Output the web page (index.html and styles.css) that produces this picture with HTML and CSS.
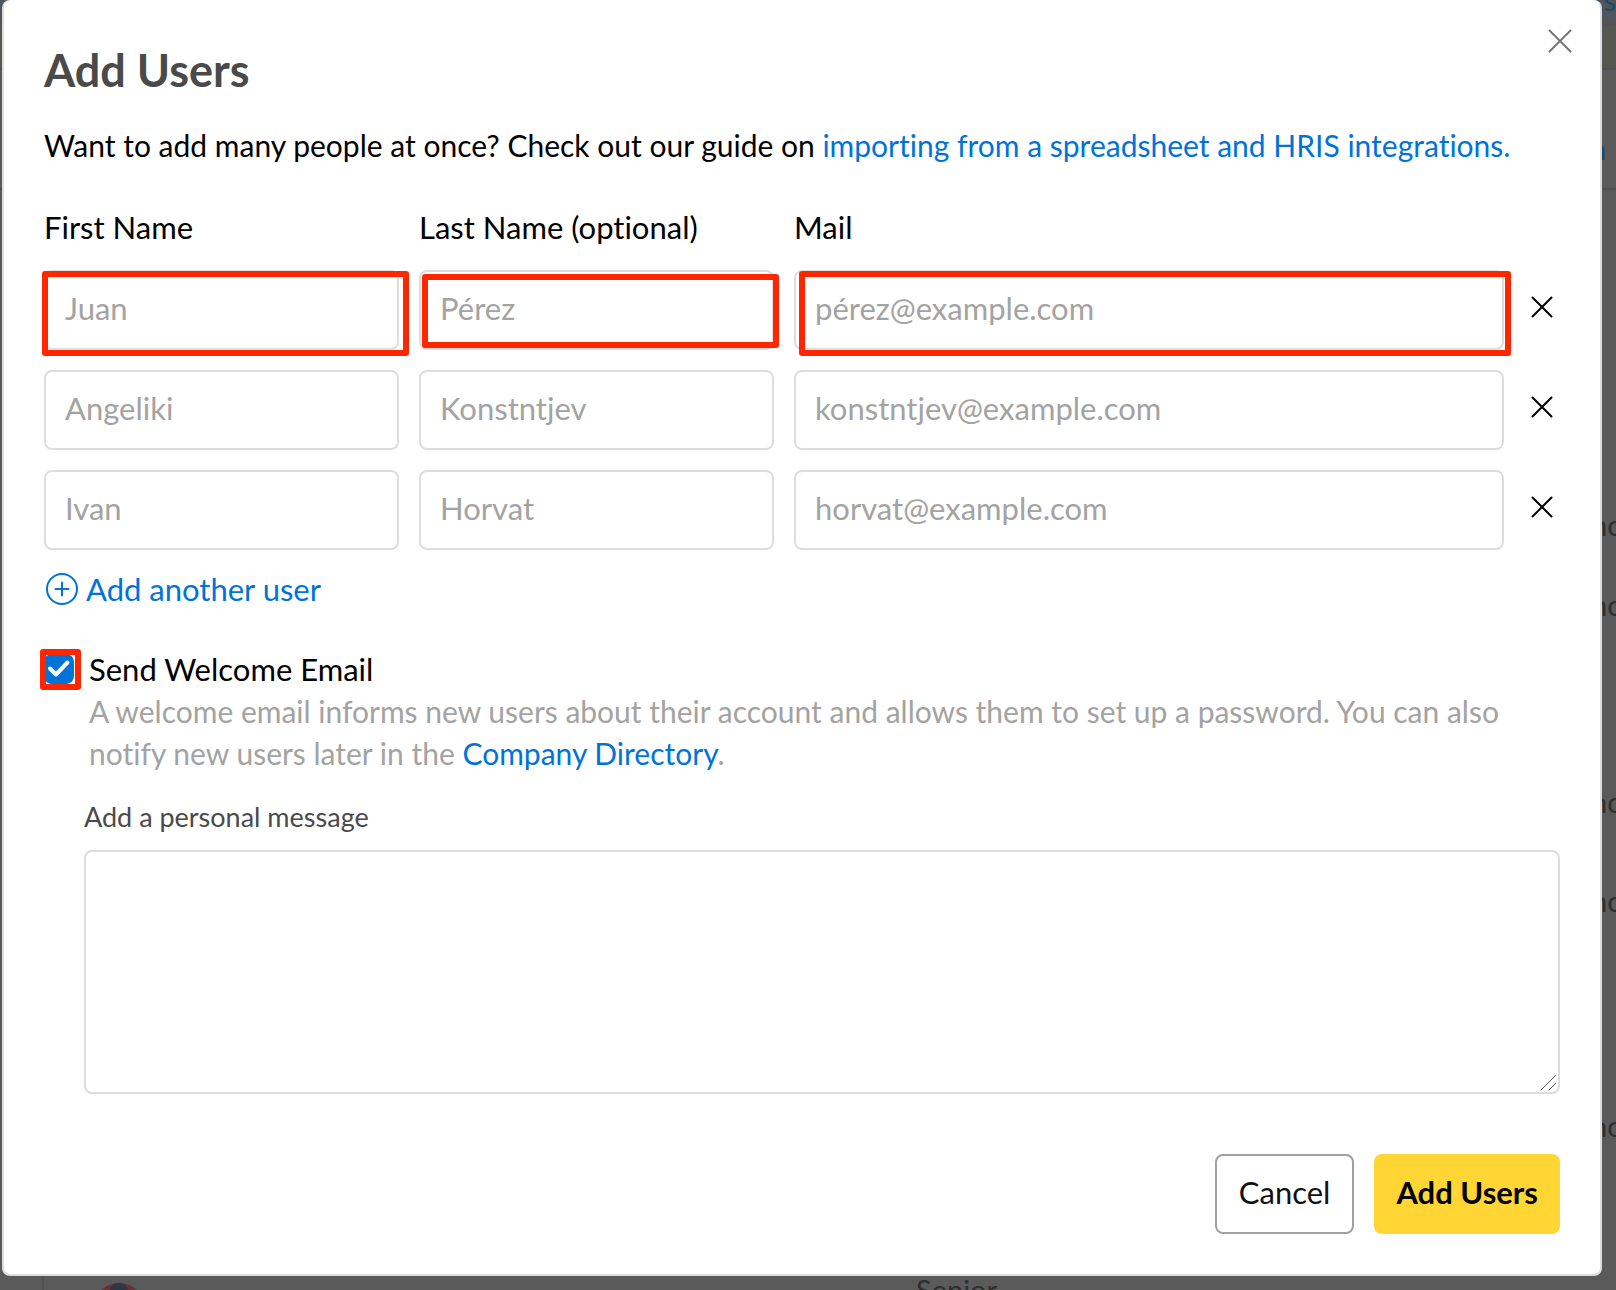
FILE: index.html
```html
<!DOCTYPE html>
<html lang="en">
<head>
<meta charset="utf-8">
<title>Add Users</title>
<link rel="stylesheet" href="styles.css">
</head>
<body>
<div class="page" aria-hidden="true">
  <div class="page-tabs"><span>Requests</span></div>
  <div class="page-bar"></div>
  <div class="page-head"><span>Open</span></div>
  <div class="page-list">
    <span class="cell cell-a">no</span>
    <span class="cell cell-b">no</span>
    <span class="cell cell-c">no</span>
    <span class="cell cell-d">no</span>
    <span class="cell cell-e">no</span>
  </div>
  <div class="page-row">
    <svg class="avatar" viewBox="0 0 52 52"><circle cx="26" cy="26" r="26" fill="#6b3036"/><ellipse cx="26" cy="7" rx="9" ry="7" fill="#2e3642"/></svg>
    <span class="role">Senior</span>
  </div>
</div>
<div class="overlay">
  <form class="modal" role="dialog" aria-labelledby="title">
    <button class="close" type="button" aria-label="Close"><svg width="24" height="24" viewBox="0 0 24 24"><path d="M1.5 1.5l21 21M22.5 1.5l-21 21"/></svg></button>
    <h1 id="title">Add Users</h1>
    <p class="intro">Want to add many people at once? Check out our guide on <a href="#">importing from a spreadsheet and HRIS integrations.</a></p>
    <div class="users">
      <label for="first1">First Name</label>
      <label for="last1">Last Name (optional)</label>
      <label class="wide" for="mail1">Mail</label>

      <div class="field mark mark-first"><input id="first1" type="text" placeholder="Juan"></div>
      <div class="field mark mark-last"><input id="last1" type="text" placeholder="Pérez"></div>
      <div class="field mark mark-mail"><input id="mail1" type="email" placeholder="pérez@example.com"></div>
      <button class="remove" type="button" aria-label="Remove user"><svg width="22" height="22" viewBox="0 0 22 22"><path d="M1.5 1.5l19 19M20.5 1.5l-19 19"/></svg></button>

      <div class="field"><input type="text" aria-label="First Name" placeholder="Angeliki"></div>
      <div class="field"><input type="text" aria-label="Last Name" placeholder="Konstntjev"></div>
      <div class="field"><input type="email" aria-label="Mail" placeholder="konstntjev@example.com"></div>
      <button class="remove" type="button" aria-label="Remove user"><svg width="22" height="22" viewBox="0 0 22 22"><path d="M1.5 1.5l19 19M20.5 1.5l-19 19"/></svg></button>

      <div class="field"><input type="text" aria-label="First Name" placeholder="Ivan"></div>
      <div class="field"><input type="text" aria-label="Last Name" placeholder="Horvat"></div>
      <div class="field"><input type="email" aria-label="Mail" placeholder="horvat@example.com"></div>
      <button class="remove" type="button" aria-label="Remove user"><svg width="22" height="22" viewBox="0 0 22 22"><path d="M1.5 1.5l19 19M20.5 1.5l-19 19"/></svg></button>
    </div>
    <button class="add" type="button"><svg width="36" height="36" viewBox="0 0 36 36"><circle cx="18" cy="18" r="15"/><path d="M18 11.5v13M11.5 18h13"/></svg>Add another user</button>
    <div class="welcome">
      <span class="tick"><input id="send" type="checkbox" checked><svg width="30" height="30" viewBox="0 0 30 30"><path d="M6 14.5l6 6L23.500 8.500"/></svg></span>
      <div class="welcome-text">
        <label for="send">Send Welcome Email</label>
        <p>A welcome email informs new users about their account and allows them to set up a password. You can also notify new users later in the <a href="#">Company Directory</a>.</p>
      </div>
    </div>
    <div class="message">
      <label for="message">Add a personal message</label>
      <div class="message-box">
        <textarea id="message"></textarea>
        <svg width="18" height="18" viewBox="0 0 18 18"><path d="M1 17L16 2M9 17L16 10"/></svg>
      </div>
    </div>
    <div class="actions">
      <button class="btn cancel" type="button">Cancel</button>
      <button class="btn primary" type="submit">Add Users</button>
    </div>
  </form>
</div>
</body>
</html>
```
FILE: styles.css
```css
* { box-sizing: border-box; }
body {
  margin: 0;
  font: 31px/42px Lato, "Open Sans", sans-serif;
  font-variant-ligatures: none;
  color: #000;
  background: #5a5a5a;
}
input, textarea, button { font: inherit; color: inherit; }
button { padding: 0; border: 0; background: none; cursor: pointer; }
a { color: #0073d9; text-decoration: none; }
svg { display: block; fill: none; stroke-linecap: round; stroke-linejoin: round; }

/* dimmed page behind the dialog */
.page {
  height: 100vh;
  overflow: hidden;
  display: flex;
  flex-direction: column;
  font-size: 29px;
  color: #2e2e2e;
}
.page-tabs {
  height: 22px;
  display: flex;
  align-items: flex-end;
  justify-content: flex-end;
  padding-bottom: 1px;
  color: #1f4666;
  background: #4e565b;
}
.page-bar {
  height: 48px;
  border-top: 4px solid #535353;
  border-bottom: 2px solid #505050;
  background: #575752;
}
.page-head {
  height: 120px;
  padding: 58px 10px 0 0;
  text-align: right;
  color: #1f4666;
  border-bottom: 2px solid #505050;
}
.page-list {
  flex: 1;
  display: flex;
  flex-direction: column;
  align-items: flex-end;
}
.cell { width: 25px; }
.cell-a { margin-top: 314px; }
.cell-b { margin-top: 38px; }
.cell-c { margin-top: 155px; }
.cell-d { margin-top: 57px; }
.cell-e { margin-top: 183px; }
.page-row {
  height: 15px;
  display: flex;
  align-items: flex-start;
  margin-left: 42px;
  padding: 0 0 0 49px;
  border-left: 2px solid #525252;
}
.avatar { width: 52px; height: 52px; margin-top: 8px; flex: none; }
.role { margin: -6px 0 0 771px; }

.overlay {
  position: absolute;
  inset: 0 0 auto 0;
  padding: 0 14px 15px 2px;
}
.modal {
  position: relative;
  padding: 50px 40px 40px;
  border: 2px solid #ddd;
  border-top: 0;
  border-radius: 8px;
  background: #fff;
}
.close {
  position: absolute;
  top: 29px;
  right: 28px;
}
.close svg { stroke: #767676; stroke-width: 2; }
h1 {
  margin: 0;
  font-size: 45px;
  line-height: 40px;
  font-weight: 700;
  color: #4a4a4a;
}
.intro { margin: 34px 0 40px; font-size: 30px; }
.users {
  display: grid;
  grid-template-columns: 1fr 1fr 2fr 36px;
  gap: 20px;
}
.users label { margin-bottom: 2px; }
.users .wide { grid-column: span 2; }
.field { position: relative; }
.field input {
  display: block;
  width: 100%;
  height: 80px;
  padding: 0 19px 4px;
  border: 2px solid #ddd;
  border-radius: 8px;
  background: #fff;
}
.field input::placeholder { color: #a3a3a1; opacity: 1; }
.mark::after {
  content: "";
  position: absolute;
  border: 6px solid #ff2600;
  border-radius: 3px;
  pointer-events: none;
}
.mark-first::after { inset: 1px -10px -6px -2px; }
.mark-last::after { inset: 4px -5px 2px 3px; }
.mark-mail::after { inset: 1px -7px -6px 5px; }
.remove {
  height: 74px;
  display: flex;
  align-items: center;
  justify-content: center;
}
.remove svg { stroke: #000; stroke-width: 2; }
.add {
  display: flex;
  align-items: center;
  gap: 6px;
  margin-top: 18px;
  color: #0073d9;
}
.add svg { stroke: #0073d9; stroke-width: 2; }
.welcome {
  display: flex;
  gap: 15px;
  margin-top: 38px;
}
.tick {
  position: relative;
  flex: none;
  width: 30px;
  height: 30px;
  margin-top: 6px;
}
.tick input {
  appearance: none;
  display: block;
  width: 30px;
  height: 30px;
  margin: 0;
  border-radius: 8px;
  background: #0073d9;
}
.tick svg {
  position: absolute;
  inset: 0;
  stroke: #fff;
  stroke-width: 4;
  pointer-events: none;
}
.tick::after {
  content: "";
  position: absolute;
  inset: -5px -7px -6px -4px;
  border: 6px solid #ff2600;
  border-radius: 3px;
  pointer-events: none;
}
.welcome-text p { margin: 0; font-size: 30px; color: #a3a3a1; }
.message {
  display: flex;
  flex-direction: column;
  gap: 12px;
  margin: 22px 0 0 40px;
}
.message label { font-size: 27px; color: #4a4a4a; }
.message-box { position: relative; }
.message-box svg {
  position: absolute;
  right: 2px;
  bottom: 3px;
  stroke: #555;
  stroke-width: 1;
  pointer-events: none;
}
.message textarea {
  display: block;
  width: 100%;
  height: 244px;
  padding: 20px;
  border: 2px solid #ddd;
  border-radius: 8px;
  resize: vertical;
}
.message textarea::-webkit-resizer { background: transparent; }
.actions {
  display: flex;
  justify-content: flex-end;
  gap: 20px;
  margin-top: 60px;
}
.btn {
  height: 80px;
  padding: 0 22px 4px;
  border-radius: 8px;
}
.cancel { border: 2px solid #a0a0a0; color: #111; }
.primary { background: #ffd633; font-weight: 700; }
```
